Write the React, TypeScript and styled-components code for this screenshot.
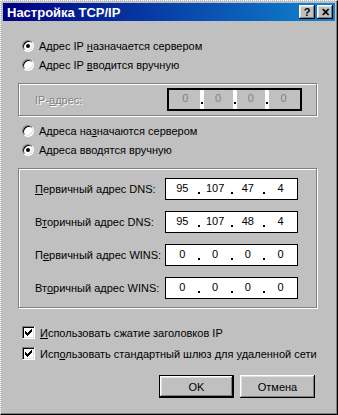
import React from 'react';
import styled, { createGlobalStyle } from 'styled-components';

const GlobalStyle = createGlobalStyle`
  html, body {
    margin: 0;
    padding: 0;
    background: #c0c0c0;
  }
  body {
    font-family: "Liberation Sans", Arial, sans-serif;
    font-size: 11px;
    color: #000;
  }
`;

const Window = styled.div`
  width: 338px;
  height: 415px;
  box-sizing: border-box;
  background: #c0c0c0;
  border-top: 1px dotted #ffffff;
  border-left: 1px dotted #ffffff;
  border-right: 1px solid #000;
  border-bottom: 1px solid #000;
  box-shadow: inset -1px -1px 0 #808080;
  padding: 2px;
  display: flex;
  flex-direction: column;
`;

const TitleBar = styled.div`
  height: 18px;
  display: flex;
  align-items: center;
  padding: 0 2px 0 4px;
  background: linear-gradient(to right, #000080, #1084d0);
`;

const TitleText = styled.div`
  flex: 1;
  color: #fff;
  font-weight: bold;
  font-size: 13px;
  padding-top: 1px;
`;

const TitleButtons = styled.div`
  display: flex;
  gap: 2px;
`;

const TitleButton = styled.div`
  width: 16px;
  height: 14px;
  box-sizing: border-box;
  background: #c0c0c0;
  box-shadow: inset -1px -1px 0 #000, inset 1px 1px 0 #fff,
    inset -2px -2px 0 #808080, inset 2px 2px 0 #dfdfdf;
  display: flex;
  align-items: center;
  justify-content: center;
  font-weight: bold;
  font-size: 11px;
  line-height: 1;
`;

const Body = styled.div`
  display: flex;
  flex-direction: column;
  padding: 15px 18px 0 15px;
`;

const RadioRow = styled.div<{ $top?: number }>`
  height: 19px;
  display: flex;
  align-items: center;
  gap: 5px;
  padding-left: 4px;
  margin-top: ${({ $top }) => $top ?? 0}px;
`;

const RadioCircle = styled.span<{ $checked?: boolean }>`
  width: 12px;
  height: 12px;
  box-sizing: border-box;
  border-radius: 50%;
  background: #fff;
  border: 1px solid;
  border-color: #808080 #fff #fff #808080;
  box-shadow: inset 1px 1px 0 #000, inset -1px -1px 0 #dfdfdf;
  display: flex;
  align-items: center;
  justify-content: center;
  &::after {
    content: '';
    width: 4px;
    height: 4px;
    border-radius: 50%;
    background: ${({ $checked }) => ($checked ? '#000' : 'transparent')};
  }
`;

const Accel = styled.span`
  text-decoration: underline;
`;

const GroupBox = styled.div<{ $top: number; $pad: string; $gap: number }>`
  margin-top: ${({ $top }) => $top}px;
  border: 1px solid #808080;
  box-shadow: inset 1px 1px 0 #fff, 1px 1px 0 #fff;
  padding: ${({ $pad }) => $pad};
  display: flex;
  flex-direction: column;
  gap: ${({ $gap }) => $gap}px;
`;

const FieldRow = styled.div`
  display: flex;
  align-items: center;
`;

const FieldLabel = styled.div<{ $width: number; $disabled?: boolean }>`
  width: ${({ $width }) => $width}px;
  color: ${({ $disabled }) => ($disabled ? '#808080' : '#000')};
  text-shadow: ${({ $disabled }) => ($disabled ? '1px 1px 0 #fff' : 'none')};
`;

const IpBox = styled.div<{ $width: number; $disabled?: boolean }>`
  width: ${({ $width }) => $width}px;
  height: ${({ $disabled }) => ($disabled ? 23 : 22)}px;
  box-sizing: border-box;
  border: ${({ $disabled }) => ($disabled ? 2 : 1)}px solid #000;
  background: ${({ $disabled }) => ($disabled ? '#c0c0c0' : '#fff')};
  display: flex;
  align-items: stretch;
  padding: 0 2px;
`;

const IpPart = styled.div<{ $disabled?: boolean }>`
  flex: 1;
  display: flex;
  align-items: center;
  justify-content: center;
  color: ${({ $disabled }) => ($disabled ? '#808080' : '#000')};
  padding-bottom: 3px;
`;

const IpDot = styled.div<{ $disabled?: boolean }>`
  width: 4px;
  background: ${({ $disabled }) => ($disabled ? '#fff' : 'transparent')};
  position: relative;
  &::after {
    content: '';
    position: absolute;
    left: 1px;
    bottom: 5px;
    width: 2px;
    height: 2px;
    background: #000;
  }
`;

const CheckRow = styled.div<{ $top?: number }>`
  height: 21px;
  display: flex;
  align-items: center;
  gap: 5px;
  padding-left: 4px;
  margin-top: ${({ $top }) => $top ?? 0}px;
`;

const CheckBox = styled.span`
  width: 13px;
  height: 13px;
  box-sizing: border-box;
  background: #fff;
  border: 1px solid;
  border-color: #808080 #fff #fff #808080;
  box-shadow: inset 1px 1px 0 #000, inset -1px -1px 0 #dfdfdf;
  display: flex;
  align-items: center;
  justify-content: center;
`;

const ButtonRow = styled.div`
  margin-top: 11px;
  display: flex;
  justify-content: flex-end;
  gap: 6px;
  padding-right: 2px;
`;

const Button = styled.div<{ $default?: boolean }>`
  width: 75px;
  height: 23px;
  box-sizing: border-box;
  background: #c0c0c0;
  border: ${({ $default }) => ($default ? '1px solid #000' : 'none')};
  box-shadow: inset -1px -1px 0 #000, inset 1px 1px 0 #fff,
    inset -2px -2px 0 #808080, inset 2px 2px 0 #dfdfdf;
  display: flex;
  align-items: center;
  justify-content: center;
`;

const CheckMark = () => (
  <svg width="7" height="7" viewBox="0 0 7 7" shapeRendering="crispEdges">
    <path
      d="M6 0h1v1h-1zM5 1h2v1h-2zM0 2h1v1h-1zM4 2h3v1h-3zM0 3h2v1h-2zM3 3h3v1h-3zM0 4h5v1h-5zM1 5h3v1h-3zM2 6h1v1h-1z"
      fill="#000"
    />
  </svg>
);

const IpAddress: React.FC<{ parts: string[]; width: number; disabled?: boolean }> = ({
  parts,
  width,
  disabled,
}) => (
  <IpBox $width={width} $disabled={disabled}>
    {parts.map((p, i) => (
      <React.Fragment key={i}>
        {i > 0 && <IpDot $disabled={disabled} />}
        <IpPart $disabled={disabled}>{p}</IpPart>
      </React.Fragment>
    ))}
  </IpBox>
);

const servers = [
  { pre: '', acc: 'П', post: 'ервичный адрес DNS:', parts: ['95', '107', '47', '4'] },
  { pre: 'В', acc: 'т', post: 'оричный адрес DNS:', parts: ['95', '107', '48', '4'] },
  { pre: 'П', acc: 'е', post: 'рвичный адрес WINS:', parts: ['0', '0', '0', '0'] },
  { pre: 'Вт', acc: 'о', post: 'ричный адрес WINS:', parts: ['0', '0', '0', '0'] },
];

export default function App() {
  return (
    <>
      <GlobalStyle />
      <Window>
        <TitleBar>
          <TitleText>Настройка TCP/IP</TitleText>
          <TitleButtons>
            <TitleButton>?</TitleButton>
            <TitleButton>✕</TitleButton>
          </TitleButtons>
        </TitleBar>
        <Body>
          <RadioRow>
            <RadioCircle $checked />
            <span>
              Адрес IP <Accel>н</Accel>азначается сервером
            </span>
          </RadioRow>
          <RadioRow>
            <RadioCircle />
            <span>
              Адрес IP <Accel>в</Accel>водится вручную
            </span>
          </RadioRow>

          <GroupBox $top={9} $pad="4px 0 4px 16px" $gap={0}>
            <FieldRow>
              <FieldLabel $width={132} $disabled>
                IP-<Accel>а</Accel>дрес:
              </FieldLabel>
              <IpAddress parts={['0', '0', '0', '0']} width={135} disabled />
            </FieldRow>
          </GroupBox>

          <RadioRow $top={5}>
            <RadioCircle />
            <span>
              Адреса на<Accel>з</Accel>начаются сервером
            </span>
          </RadioRow>
          <RadioRow>
            <RadioCircle $checked />
            <span>
              Адреса вво<Accel>д</Accel>ятся вручную
            </span>
          </RadioRow>

          <GroupBox $top={9} $pad="9px 0 8px 16px" $gap={11}>
            {servers.map((s) => (
              <FieldRow key={s.pre + s.post}>
                <FieldLabel $width={130}>
                  {s.pre}
                  <Accel>{s.acc}</Accel>
                  {s.post}
                </FieldLabel>
                <IpAddress parts={s.parts} width={133} />
              </FieldRow>
            ))}
          </GroupBox>

          <CheckRow $top={14}>
            <CheckBox>
              <CheckMark />
            </CheckBox>
            <span>
              <Accel>И</Accel>спользовать сжатие заголовков IP
            </span>
          </CheckRow>
          <CheckRow>
            <CheckBox>
              <CheckMark />
            </CheckBox>
            <span>
              Исп<Accel>о</Accel>льзовать стандартный шлюз для удаленной сети
            </span>
          </CheckRow>

          <ButtonRow>
            <Button $default>OK</Button>
            <Button>Отмена</Button>
          </ButtonRow>
        </Body>
      </Window>
    </>
  );
}
